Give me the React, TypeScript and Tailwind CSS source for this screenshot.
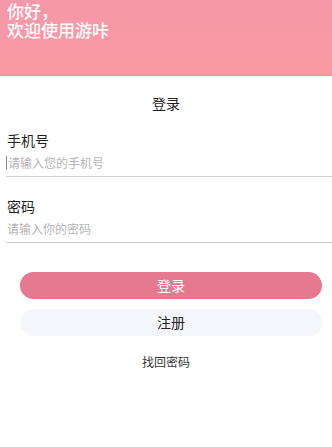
import React from 'react'

const font = { fontFamily: '"Noto Sans CJK SC", "Noto Sans", sans-serif' }

export default function App() {
  return (
    <div className="w-[332px] h-[447px] bg-white overflow-hidden" style={font}>
      {/* Header */}
      <div className="h-[76px] bg-gradient-to-b from-[#f598a9] to-[#fc99a0] px-[7px] pt-[1px] text-white text-[17px] leading-[19px] font-medium">
        <p className="leading-[19px]">你好，</p>
        <p className="leading-[19px]">欢迎使用游咔</p>
      </div>

      <h2 className="mt-[17px] text-center text-[14px] leading-[20px] text-[#222]">登录</h2>

      {/* Form */}
      <div className="mt-[17px] pl-[6px]">
        <label className="block pl-[1px] text-[14px] leading-[20px] text-[#1f1f1f]">手机号</label>
        <div className="flex items-center h-[27px] border-b border-[#cfcfcf]">
          <div className="w-[1px] h-[14px] bg-[#888]" />
          <input
            className="flex-1 ml-[1px] bg-transparent outline-none text-[12px] text-[#333] placeholder:text-[#b5b5b5]"
            placeholder="请输入您的手机号"
          />
        </div>

        <label className="block mt-[19px] pl-[1px] text-[14px] leading-[20px] text-[#1f1f1f]">密码</label>
        <div className="flex items-center h-[27px] border-b border-[#cfcfcf]">
          <input
            type="password"
            className="flex-1 pl-[1px] bg-transparent outline-none text-[12px] text-[#333] placeholder:text-[#b5b5b5]"
            placeholder="请输入你的密码"
          />
        </div>
      </div>

      {/* Buttons */}
      <div className="mt-[29px] ml-[20px] mr-[10px] flex flex-col gap-[10px]">
        <button className="h-[27px] rounded-full bg-[#e47990] text-white text-[14px]">登录</button>
        <button className="h-[27px] rounded-full bg-[#f5f6fb] text-[#222] text-[14px]">注册</button>
      </div>

      <p className="mt-[18px] text-center text-[12px] leading-[16px] text-[#333]">找回密码</p>
    </div>
  )
}
